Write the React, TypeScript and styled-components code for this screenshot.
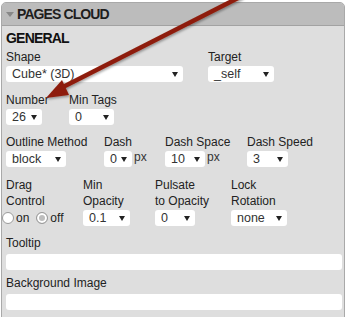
import styled, { createGlobalStyle } from "styled-components";

const Global = createGlobalStyle`
  *, *::before, *::after {
    box-sizing: border-box;
  }
  html, body {
    margin: 0;
    padding: 0;
    background: #ffffff;
    font-family: "Liberation Sans", Arial, sans-serif;
  }
`;

const Page = styled.div`
  position: relative;
  width: 349px;
  height: 317px;
  overflow: hidden;
  padding: 2px 0 0 1px;
`;

const Panel = styled.div`
  width: 344px;
  height: 330px;
  border: 1px solid #a9a9a9;
  border-radius: 5px 5px 0 0;
  background: #dedede;
`;

const Header = styled.div`
  height: 23px;
  background: #bcbcbc;
  border-bottom: 1px solid #a2a2a2;
  border-radius: 4px 4px 0 0;
  display: flex;
  align-items: center;
  padding-left: 4px;
  gap: 3px;
  font-weight: bold;
  font-size: 14px;
  color: #1e1e1e;
  letter-spacing: -0.9px;
`;

const Caret = styled.span`
  width: 0;
  height: 0;
  border-left: 4px solid transparent;
  border-right: 4px solid transparent;
  border-top: 5px solid #888;
  margin-top: 1px;
`;

const Body = styled.div`
  padding: 3px 0 0 4px;
  display: flex;
  flex-direction: column;
`;

const Section = styled.div`
  font-weight: bold;
  font-size: 14px;
  letter-spacing: -0.8px;
  color: #111;
  height: 19px;
  line-height: 19px;
  margin-bottom: 2px;
`;

const Row = styled.div<{ $mb?: number }>`
  display: flex;
  align-items: flex-end;
  margin-bottom: ${(p) => p.$mb ?? 10}px;
`;

const Field = styled.div<{ $w?: number; $mb?: number }>`
  width: ${(p) => (p.$w ? `${p.$w}px` : "auto")};
  flex: ${(p) => (p.$w ? "none" : "1")};
  display: flex;
  flex-direction: column;
  margin-bottom: ${(p) => p.$mb ?? 0}px;
`;

const Label = styled.div<{ $lh?: number; $mb?: number }>`
  font-size: 12px;
  line-height: ${(p) => p.$lh ?? 15}px;
  color: #222;
  margin-bottom: ${(p) => p.$mb ?? 1}px;
`;

const Inline = styled.div`
  display: flex;
  align-items: center;
  gap: 2px;
`;

const Select = styled.div<{ $w: number }>`
  width: ${(p) => p.$w}px;
  height: 16px;
  background: #fff;
  border-radius: 3px;
  display: flex;
  align-items: center;
  justify-content: space-between;
  padding: 0 5px 0 6px;
  font-size: 12.5px;
  color: #333;
`;

const Tri = styled.span`
  width: 0;
  height: 0;
  border-left: 3px solid transparent;
  border-right: 3px solid transparent;
  border-top: 5px solid #222;
  margin-top: 1px;
`;

const Unit = styled.span`
  font-size: 12px;
  color: #333;
  margin-top: -4px;
`;

const TextInput = styled.div`
  width: 336px;
  height: 16px;
  background: #fff;
  border-radius: 3px;
`;

const Radios = styled.div`
  display: flex;
  align-items: center;
  font-size: 12px;
  color: #222;
  height: 16px;
  margin-left: -4px;
`;

const Radio = styled.span<{ $on?: boolean }>`
  width: 12px;
  height: 12px;
  border-radius: 50%;
  border: 1px solid #9a9a9a;
  background: ${(p) => (p.$on ? "#bdbdbd" : "#fff")};
  box-shadow: ${(p) => (p.$on ? "inset 0 0 0 2px #fff" : "none")};
  margin-right: 2px;
`;

const RadioText = styled.span`
  margin-right: 7px;
`;

const Arrow = styled.svg`
  position: absolute;
  left: 0;
  top: 0;
  pointer-events: none;
`;

function Sel({ w, v }: { w: number; v: string }) {
  return (
    <Select $w={w}>
      <span>{v}</span>
      <Tri />
    </Select>
  );
}

export default function App() {
  return (
    <Page>
      <Global />
      <Panel>
        <Header>
          <Caret />
          PAGES CLOUD
        </Header>
        <Body>
          <Section>GENERAL</Section>
          <Row $mb={11}>
            <Field $w={202}>
              <Label>Shape</Label>
              <Sel w={177} v="Cube* (3D)" />
            </Field>
            <Field $w={80}>
              <Label>Target</Label>
              <Sel w={66} v="_self" />
            </Field>
          </Row>
          <Row>
            <Field $w={63}>
              <Label>Number</Label>
              <Sel w={36} v="26" />
            </Field>
            <Field $w={80}>
              <Label>Min Tags</Label>
              <Sel w={45} v="0" />
            </Field>
          </Row>
          <Row>
            <Field $w={98}>
              <Label>Outline Method</Label>
              <Sel w={60} v="block" />
            </Field>
            <Field $w={61}>
              <Label>Dash</Label>
              <Inline>
                <Sel w={28} v="0" />
                <Unit>px</Unit>
              </Inline>
            </Field>
            <Field $w={82}>
              <Label>Dash Space</Label>
              <Inline>
                <Sel w={40} v="10" />
                <Unit>px</Unit>
              </Inline>
            </Field>
            <Field $w={80}>
              <Label>Dash Speed</Label>
              <Sel w={41} v="3" />
            </Field>
          </Row>
          <Row>
            <Field $w={77}>
              <Label $lh={16}>
                Drag
                <br />
                Control
              </Label>
              <Radios>
                <Radio />
                <RadioText>on</RadioText>
                <Radio $on />
                <RadioText>off</RadioText>
              </Radios>
            </Field>
            <Field $w={72}>
              <Label $lh={16}>
                Min
                <br />
                Opacity
              </Label>
              <Sel w={47} v="0.1" />
            </Field>
            <Field $w={76}>
              <Label $lh={16}>
                Pulsate
                <br />
                to Opacity
              </Label>
              <Sel w={40} v="0" />
            </Field>
            <Field $w={80}>
              <Label $lh={16}>
                Lock
                <br />
                Rotation
              </Label>
              <Sel w={56} v="none" />
            </Field>
          </Row>
          <Field $mb={6}>
            <Label $mb={3}>Tooltip</Label>
            <TextInput />
          </Field>
          <Field>
            <Label $mb={3}>Background Image</Label>
            <TextInput />
          </Field>
        </Body>
      </Panel>
      <Arrow width="349" height="317" viewBox="0 0 349 317">
        <defs>
          <filter id="sh" x="-10%" y="-10%" width="120%" height="120%">
            <feDropShadow dx="1" dy="1.5" stdDeviation="1" floodColor="#000" floodOpacity="0.35" />
          </filter>
        </defs>
        <g filter="url(#sh)" fill="#8e1f0b" stroke="#8e1f0b">
          <line x1="242" y1="-4" x2="63" y2="87" strokeWidth="4.5" />
          <polygon points="46,98 69,95 62,80" stroke="none" />
        </g>
      </Arrow>
    </Page>
  );
}
